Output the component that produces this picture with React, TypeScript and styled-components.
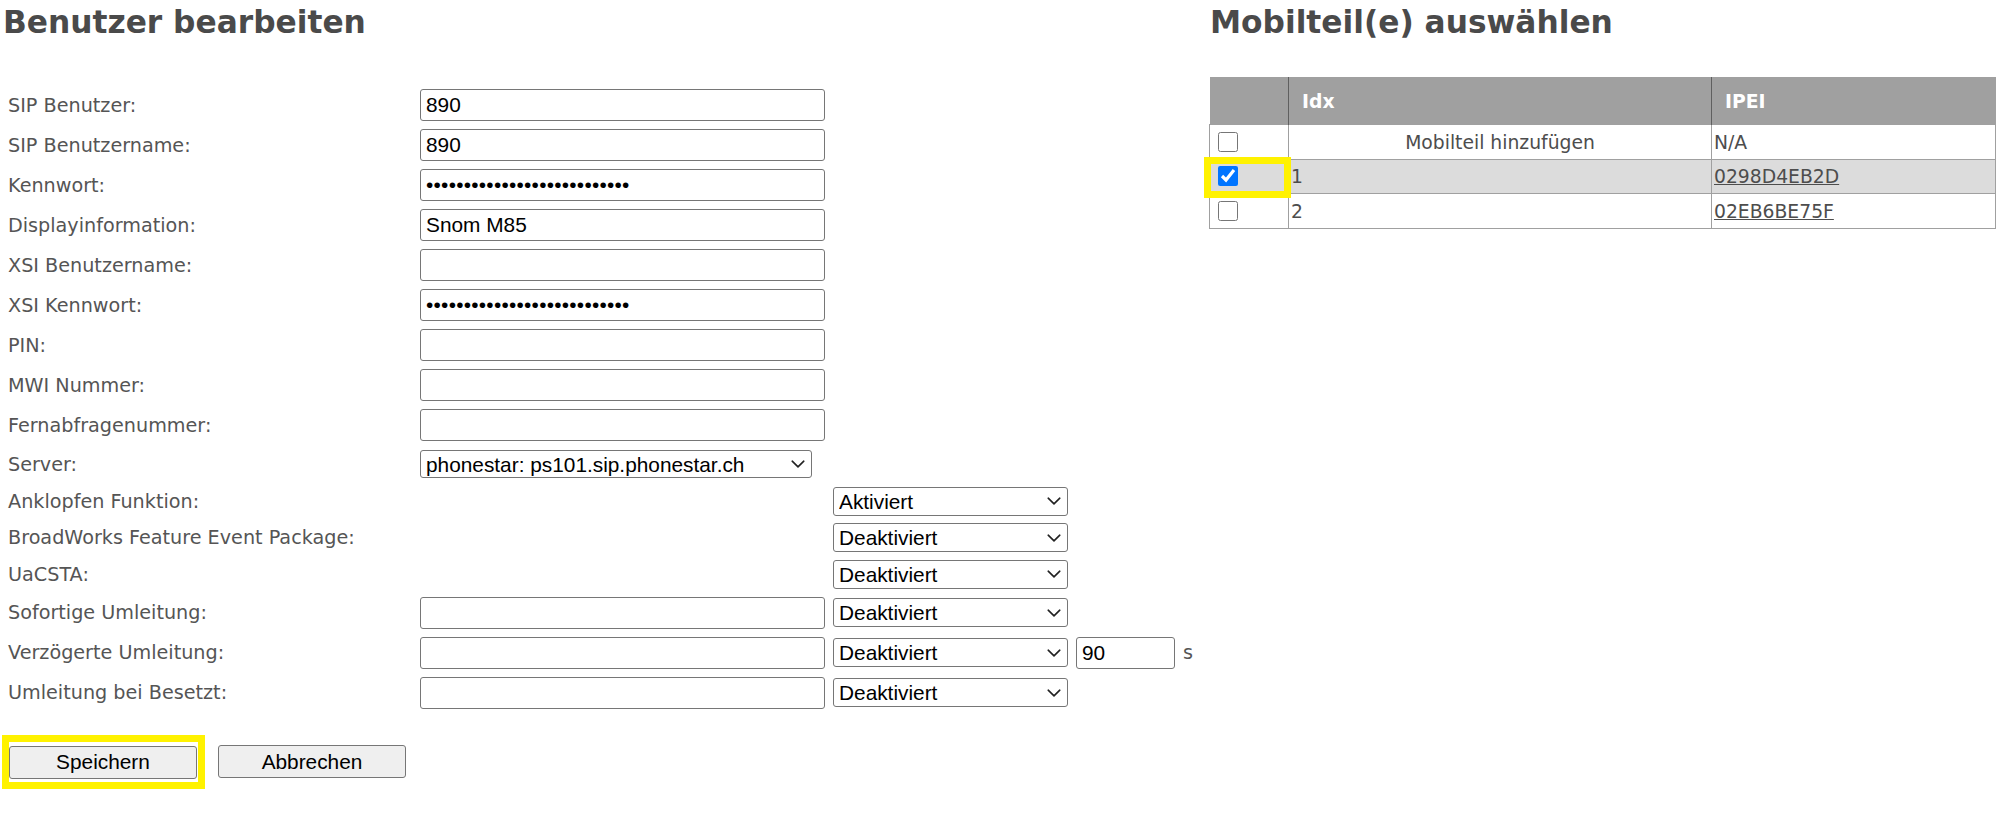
import styled, { createGlobalStyle } from "styled-components";

const GlobalStyle = createGlobalStyle`
  html, body {
    margin: 0;
    padding: 0;
    background: #fff;
  }
  body {
    width: 2000px;
    height: 817px;
    overflow: hidden;
    font-family: "DejaVu Sans", Verdana, sans-serif;
    color: #555;
  }
`;

const Page = styled.div`
  display: flex;
  align-items: flex-start;
  width: 2000px;
`;

const EditSection = styled.section`
  width: 1209px;
  flex-shrink: 0;
`;

const HandsetSection = styled.section`
  width: 786px;
  flex-shrink: 0;
`;

const Heading = styled.h1<{ $indent: number }>`
  margin: 4px 0 0;
  padding-left: ${(p) => p.$indent}px;
  font-family: "DejaVu Sans", Verdana, sans-serif;
  font-size: 31.25px;
  font-weight: bold;
  line-height: 36px;
  color: #4a4a4a;
  white-space: nowrap;
`;

const Form = styled.form`
  margin-top: 45px;
`;

const FieldRow = styled.div<{ $h: number }>`
  display: grid;
  grid-template-columns: 412px 405px 235px 99px auto;
  column-gap: 8px;
  align-items: center;
  height: ${(p) => p.$h}px;
`;

const Label = styled.label`
  padding-left: 8px;
  font-size: 19.2px;
  color: #555;
  white-space: nowrap;
`;

const TextInput = styled.input`
  box-sizing: border-box;
  width: 100%;
  height: 32px;
  margin: 0;
  padding: 0 5px;
  border: 1.5px solid #767676;
  border-radius: 3px;
  background: #fff;
  font-family: "Liberation Sans", Arial, sans-serif;
  font-size: 20.83px;
  color: #000;
  outline: none;

  &[type="password"] {
    letter-spacing: 0.25px;
  }
`;

const SelectBox = styled.div<{ $width?: number; $col?: number }>`
  position: relative;
  width: ${(p) => (p.$width ? `${p.$width}px` : "100%")};
  grid-column: ${(p) => p.$col ?? "auto"};
`;

const Dropdown = styled.select<{ $h?: number }>`
  display: block;
  box-sizing: border-box;
  width: 100%;
  height: ${(p) => p.$h ?? 29}px;
  margin: 0;
  padding: 0 28px 0 5px;
  appearance: none;
  border: 1.5px solid #767676;
  border-radius: 3px;
  background-color: #fff;
  font-family: "Liberation Sans", Arial, sans-serif;
  font-size: 20.83px;
  color: #000;
  outline: none;
`;

const Chevron = styled.svg`
  position: absolute;
  right: 7px;
  top: 50%;
  width: 14px;
  height: 8px;
  transform: translateY(-50%);
  pointer-events: none;
`;

const Unit = styled.span`
  font-size: 19.2px;
  color: #555;
`;

const Actions = styled.div`
  display: flex;
  align-items: center;
  gap: 13px;
  margin-top: 22px;
  padding-left: 2px;
`;

const Highlight = styled.div`
  border: 7px solid #fff200;
  padding: 4px 1px 3px 0;
`;

const Button = styled.button`
  box-sizing: border-box;
  width: 188px;
  height: 33px;
  margin: 0;
  padding: 0;
  border: 1.5px solid #767676;
  border-radius: 3px;
  background: #efefef;
  font-family: "Liberation Sans", Arial, sans-serif;
  font-size: 20.83px;
  color: #000;
`;

const Table = styled.table`
  width: 786px;
  margin-top: 37px;
  border-collapse: collapse;
  table-layout: fixed;
  font-size: 18.75px;
  color: #4d4d4d;
`;

const HeadCell = styled.th<{ $divider?: boolean }>`
  box-sizing: border-box;
  height: 47px;
  padding: 3px 0 0 13px;
  background: #a0a0a0;
  color: #fff;
  font-weight: bold;
  text-align: left;
  border: none;
  border-left: ${(p) => (p.$divider ? "1.5px solid #5f5f5f" : "none")};
`;

const BodyRow = styled.tr<{ $selected?: boolean; $h: number }>`
  height: ${(p) => p.$h}px;
  background: ${(p) => (p.$selected ? "#dcdcdc" : "#fff")};
`;

const Cell = styled.td<{ $center?: boolean }>`
  position: relative;
  padding: 1px 2px 0;
  border: 1.5px solid #a0a0a0;
  text-align: ${(p) => (p.$center ? "center" : "left")};
  white-space: nowrap;
  overflow: visible;
`;

const CheckCell = styled(Cell)`
  padding: 0 0 0 8px;
`;

const Check = styled.input.attrs({ type: "checkbox" })`
  display: block;
  width: 20px;
  height: 20px;
  margin: 0;
`;

const Marker = styled.span`
  position: absolute;
  left: -6px;
  top: -3px;
  right: -3px;
  bottom: -5px;
  z-index: 1;
  border: 7px solid #fff200;
  pointer-events: none;
`;

const IpeiLink = styled.a`
  color: #4d4d4d;
  text-decoration: underline;
`;

const secret = "abcdefghijklmnopqrstuvwxyz0";

const textFields = [
  { label: "SIP Benutzer:", value: "890" },
  { label: "SIP Benutzername:", value: "890" },
  { label: "Kennwort:", value: secret, password: true },
  { label: "Displayinformation:", value: "Snom M85" },
  { label: "XSI Benutzername:", value: "" },
  { label: "XSI Kennwort:", value: secret, password: true },
  { label: "PIN:", value: "" },
  { label: "MWI Nummer:", value: "" },
  { label: "Fernabfragenummer:", value: "" },
];

const toggleFields = [
  { label: "Anklopfen Funktion:", value: "Aktiviert" },
  { label: "BroadWorks Feature Event Package:", value: "Deaktiviert" },
  { label: "UaCSTA:", value: "Deaktiviert" },
];

const forwardFields = [
  { label: "Sofortige Umleitung:" },
  { label: "Verzögerte Umleitung:", delay: "90" },
  { label: "Umleitung bei Besetzt:" },
];

const ChevronIcon = () => (
  <Chevron viewBox="0 0 14 8" aria-hidden="true">
    <polyline
      points="1.2,1.2 7,6.8 12.8,1.2"
      fill="none"
      stroke="#222"
      strokeWidth="1.6"
      strokeLinecap="round"
      strokeLinejoin="round"
    />
  </Chevron>
);

const StateSelect = ({ value, col }: { value: string; col?: number }) => (
  <SelectBox $col={col}>
    <Dropdown defaultValue={value}>
      <option>Aktiviert</option>
      <option>Deaktiviert</option>
    </Dropdown>
    <ChevronIcon />
  </SelectBox>
);

const handsets = [
  { idx: "Mobilteil hinzufügen", ipei: "N/A", center: true, h: 35 },
  { idx: "1", ipei: "0298D4EB2D", link: true, checked: true, h: 34 },
  { idx: "2", ipei: "02EB6BE75F", link: true, h: 35 },
];

export default function App() {
  return (
    <>
      <GlobalStyle />
      <Page>
        <EditSection>
          <Heading $indent={3}>Benutzer bearbeiten</Heading>
          <Form onSubmit={(e) => e.preventDefault()}>
            {textFields.map((f) => (
              <FieldRow $h={40} key={f.label}>
                <Label>{f.label}</Label>
                <TextInput
                  type={f.password ? "password" : "text"}
                  defaultValue={f.value}
                />
              </FieldRow>
            ))}
            <FieldRow $h={38}>
              <Label>Server:</Label>
              <SelectBox $width={392}>
                <Dropdown $h={28} defaultValue="ps101">
                  <option value="ps101">phonestar: ps101.sip.phonestar.ch</option>
                </Dropdown>
                <ChevronIcon />
              </SelectBox>
            </FieldRow>
            {toggleFields.map((f) => (
              <FieldRow $h={36.5} key={f.label}>
                <Label>{f.label}</Label>
                <StateSelect value={f.value} col={3} />
              </FieldRow>
            ))}
            {forwardFields.map((f) => (
              <FieldRow $h={40} key={f.label}>
                <Label>{f.label}</Label>
                <TextInput type="text" defaultValue="" />
                <StateSelect value="Deaktiviert" />
                {f.delay && (
                  <>
                    <TextInput type="text" defaultValue={f.delay} />
                    <Unit>s</Unit>
                  </>
                )}
              </FieldRow>
            ))}
            <Actions>
              <Highlight>
                <Button type="submit">Speichern</Button>
              </Highlight>
              <Button type="button">Abbrechen</Button>
            </Actions>
          </Form>
        </EditSection>

        <HandsetSection>
          <Heading $indent={1}>Mobilteil(e) auswählen</Heading>
          <Table>
            <colgroup>
              <col style={{ width: 79 }} />
              <col style={{ width: 423 }} />
              <col style={{ width: 284 }} />
            </colgroup>
            <thead>
              <tr>
                <HeadCell />
                <HeadCell $divider>Idx</HeadCell>
                <HeadCell $divider>IPEI</HeadCell>
              </tr>
            </thead>
            <tbody>
              {handsets.map((h) => (
                <BodyRow $h={h.h} $selected={h.checked} key={h.ipei}>
                  <CheckCell>
                    <Check defaultChecked={h.checked} />
                    {h.checked && <Marker />}
                  </CheckCell>
                  <Cell $center={h.center}>{h.idx}</Cell>
                  <Cell>
                    {h.link ? <IpeiLink href="#">{h.ipei}</IpeiLink> : h.ipei}
                  </Cell>
                </BodyRow>
              ))}
            </tbody>
          </Table>
        </HandsetSection>
      </Page>
    </>
  );
}
